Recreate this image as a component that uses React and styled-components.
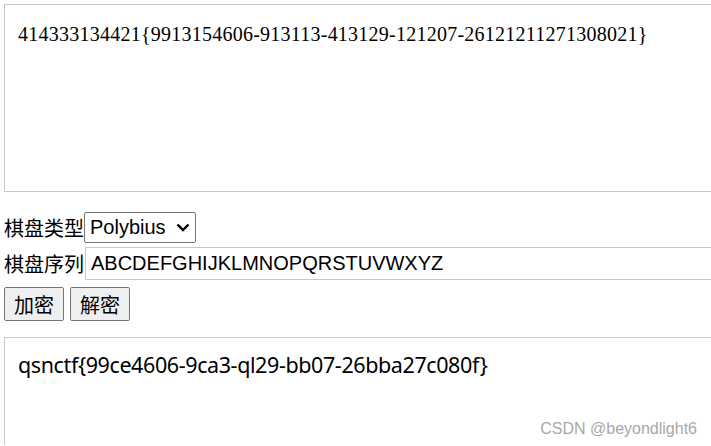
import styled, { createGlobalStyle } from "styled-components";

const GlobalStyle = createGlobalStyle`
  html, body {
    margin: 0;
    padding: 0;
    background: #fff;
    overflow: hidden;
  }
  body {
    font-family: "Noto Sans CJK SC", "Liberation Sans", sans-serif;
    font-size: 20px;
    color: #000;
  }
`;

const Page = styled.div`
  position: relative;
  width: 711px;
  height: 446px;
  overflow: hidden;
  padding: 4px 0 0 4px;
  box-sizing: border-box;
  display: flex;
  flex-direction: column;
`;

const TextBox = styled.div`
  box-sizing: border-box;
  width: 740px;
  height: ${(p) => p.height}px;
  flex-shrink: 0;
  border: 1px solid #c8c8c8;
  border-bottom-width: ${(p) => (p.open ? 0 : 1)}px;
  padding: ${(p) => (p.serif ? "17px 13px" : "15px 13px")};
  font-family: ${(p) =>
    p.serif
      ? '"Liberation Serif", "DejaVu Serif", serif'
      : '"Noto Sans", "Liberation Sans", sans-serif'};
  font-size: ${(p) => (p.serif ? "20px" : "21.5px")};
  line-height: 24px;
  letter-spacing: ${(p) => (p.serif ? "0.24px" : "-0.4px")};
  white-space: nowrap;
`;

const Form = styled.div`
  display: flex;
  flex-direction: column;
  margin-top: 20px;
`;

const Row = styled.div`
  display: flex;
  align-items: center;
  height: ${(p) => p.h}px;
  margin-bottom: ${(p) => p.mb}px;
`;

const Label = styled.span`
  width: 80px;
  font-size: 20px;
  line-height: 24px;
  white-space: nowrap;
`;

const Select = styled.div`
  box-sizing: border-box;
  width: 112px;
  height: 31px;
  border: 1px solid #767676;
  border-radius: 2px;
  display: flex;
  align-items: center;
  justify-content: space-between;
  padding: 0 5px 0 5px;
  font-family: "Liberation Sans", Arial, sans-serif;
  font-size: 20px;
`;

const TextInput = styled.div`
  box-sizing: border-box;
  width: 640px;
  height: 33px;
  border: 1px solid #c8c8c8;
  border-right: none;
  display: flex;
  align-items: center;
  padding-left: 5px;
  margin-left: 1px;
  font-family: "Liberation Sans", Arial, sans-serif;
  font-size: 20px;
`;

const Buttons = styled.div`
  display: flex;
  gap: 6px;
  margin-bottom: 16px;
`;

const Button = styled.div`
  box-sizing: border-box;
  width: 60px;
  height: 34px;
  border: 1px solid #767676;
  border-radius: 2px;
  background: #efefef;
  display: flex;
  align-items: center;
  justify-content: center;
  font-size: 20px;
`;

const Watermark = styled.div`
  position: absolute;
  right: 14px;
  bottom: 8px;
  font-family: "Liberation Sans", Arial, sans-serif;
  font-size: 16px;
  color: #a8a8a8;
`;

function Chevron() {
  return (
    <svg width="14" height="9" viewBox="0 0 14 9">
      <path d="M1.5 1.5 L7 7 L12.5 1.5" fill="none" stroke="#000" strokeWidth="2.4" />
    </svg>
  );
}

export default function App() {
  return (
    <>
      <GlobalStyle />
      <Page>
        <TextBox serif height={188}>
          414333134421{"{"}9913154606-913113-413129-121207-26121211271308021{"}"}
        </TextBox>
        <Form>
          <Row h={31} mb={4}>
            <Label>棋盘类型</Label>
            <Select>
              Polybius
              <Chevron />
            </Select>
          </Row>
          <Row h={33} mb={7}>
            <Label>棋盘序列</Label>
            <TextInput>ABCDEFGHIJKLMNOPQRSTUVWXYZ</TextInput>
          </Row>
          <Buttons>
            <Button>加密</Button>
            <Button>解密</Button>
          </Buttons>
        </Form>
        <TextBox open height={108}>
          qsnctf{"{"}99ce4606-9ca3-ql29-bb07-26bba27c080f{"}"}
        </TextBox>
        <Watermark>CSDN @beyondlight6</Watermark>
      </Page>
    </>
  );
}
